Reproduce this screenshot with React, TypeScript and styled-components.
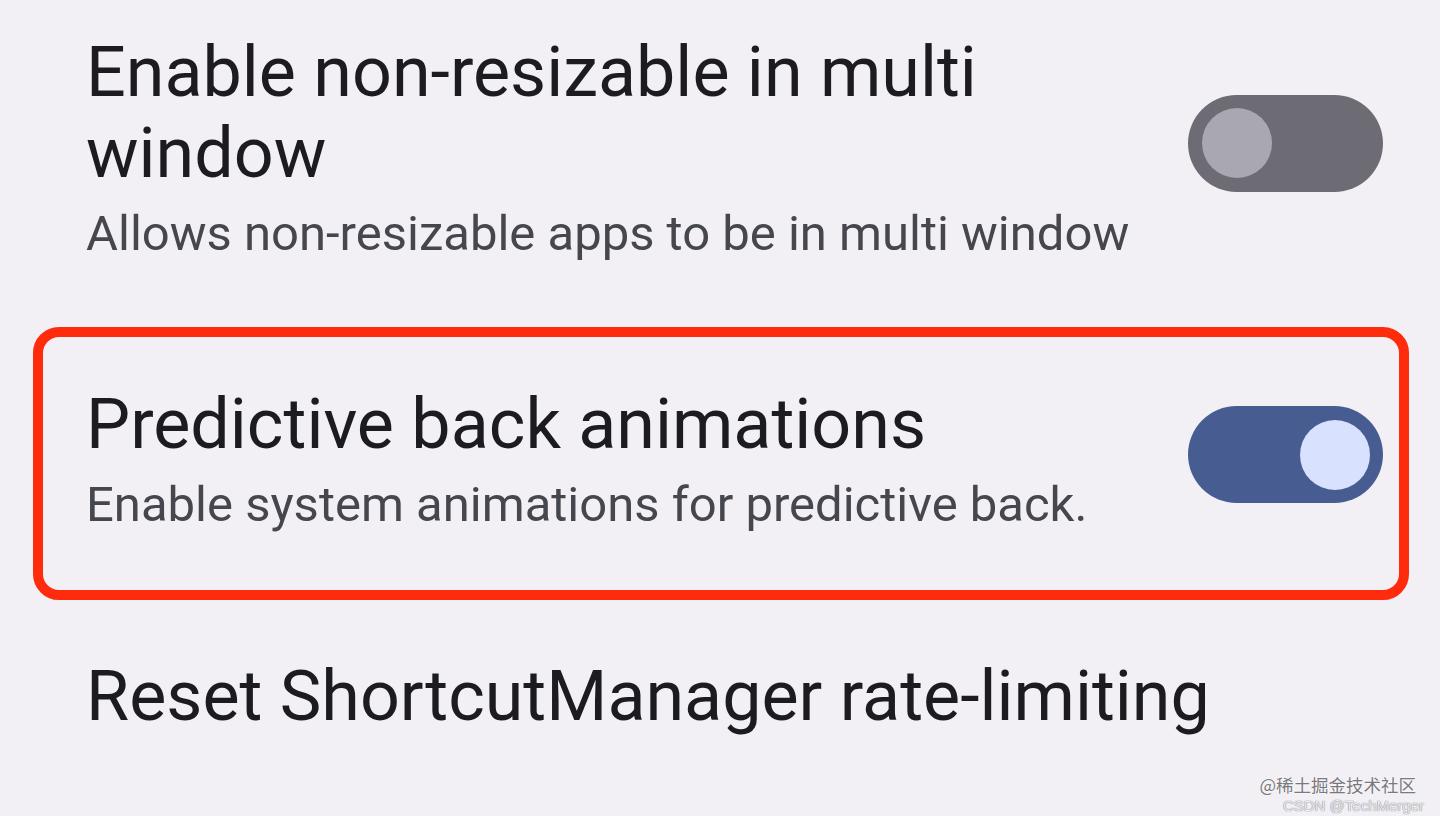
import React from "react";
import styled, { createGlobalStyle } from "styled-components";

const Global = createGlobalStyle`
  html, body {
    margin: 0;
    padding: 0;
    background: #f2f0f4;
  }
  body {
    font-family: Roboto, "Noto Sans", Arial, sans-serif;
    -webkit-font-smoothing: antialiased;
  }
`;

const Page = styled.div`
  position: relative;
  width: 1440px;
  height: 816px;
  overflow: hidden;
  box-sizing: border-box;
  padding: 32px 31px 0 33px;
  background: #f2f0f4;
  display: flex;
  flex-direction: column;
`;

const Row = styled.div<{ $inset?: boolean; $gapAfter?: number }>`
  display: flex;
  align-items: center;
  justify-content: space-between;
  padding: ${(p) => (p.$inset ? "0" : "0 26px 0 53px")};
  margin-bottom: ${(p) => p.$gapAfter ?? 0}px;
`;

const TextCol = styled.div`
  display: flex;
  flex-direction: column;
  gap: 10px;
  white-space: nowrap;
`;

const Title = styled.div`
  font-size: 70px;
  line-height: 81px;
  color: #1b1b21;
  font-weight: 400;
`;

const Summary = styled.div`
  font-size: 49px;
  line-height: 60px;
  color: #46464f;
  font-weight: 400;
`;

const Highlight = styled.div`
  border: 10px solid #fe2b0c;
  border-radius: 26px;
  padding: 47px 16px 55px 43px;
  margin-bottom: 56px;
`;

const Track = styled.div<{ $on: boolean }>`
  flex: none;
  width: 195px;
  height: 97px;
  border-radius: 49px;
  background: ${(p) => (p.$on ? "#475d92" : "#6d6c75")};
  display: flex;
  align-items: center;
  justify-content: ${(p) => (p.$on ? "flex-end" : "flex-start")};
  padding: 0 13px 0 14px;
  box-sizing: border-box;
  margin-bottom: 10px;
`;

const Thumb = styled.div<{ $on: boolean }>`
  width: 70px;
  height: 70px;
  border-radius: 50%;
  background: ${(p) => (p.$on ? "#d8e2ff" : "#a9a8b1")};
`;

const Watermark = styled.div`
  position: absolute;
  right: 16px;
  bottom: 3px;
  display: flex;
  flex-direction: column;
  align-items: flex-end;
  gap: 4px;
`;

const WmMain = styled.div`
  font-family: "Noto Sans CJK SC", "Noto Sans", sans-serif;
  font-size: 17.5px;
  line-height: 18px;
  color: #78787e;
  text-shadow: 0 0 1px #ffffff, 0 0 2px #ffffff;
  margin-right: 8px;
`;

const WmSub = styled.div`
  font-family: "Liberation Sans", Arial, sans-serif;
  font-size: 15px;
  line-height: 15px;
  color: #ececf0;
  text-shadow: 0 0 1px #85858b, 0 0 1px #85858b;
`;

const Switch = ({ on }: { on: boolean }) => (
  <Track $on={on}>
    <Thumb $on={on} />
  </Track>
);

export default function App() {
  return (
    <>
      <Global />
      <Page>
        <Row $gapAfter={63}>
          <TextCol>
            <Title>
              Enable non-resizable in multi
              <br />
              window
            </Title>
            <Summary>Allows non-resizable apps to be in multi window</Summary>
          </TextCol>
          <Switch on={false} />
        </Row>
        <Highlight>
          <Row $inset>
            <TextCol>
              <Title>Predictive back animations</Title>
              <Summary>Enable system animations for predictive back.</Summary>
            </TextCol>
            <Switch on={true} />
          </Row>
        </Highlight>
        <Row>
          <TextCol>
            <Title>Reset ShortcutManager rate-limiting</Title>
          </TextCol>
        </Row>
        <Watermark>
          <WmMain>@稀土掘金技术社区</WmMain>
          <WmSub>CSDN @TechMerger</WmSub>
        </Watermark>
      </Page>
    </>
  );
}
